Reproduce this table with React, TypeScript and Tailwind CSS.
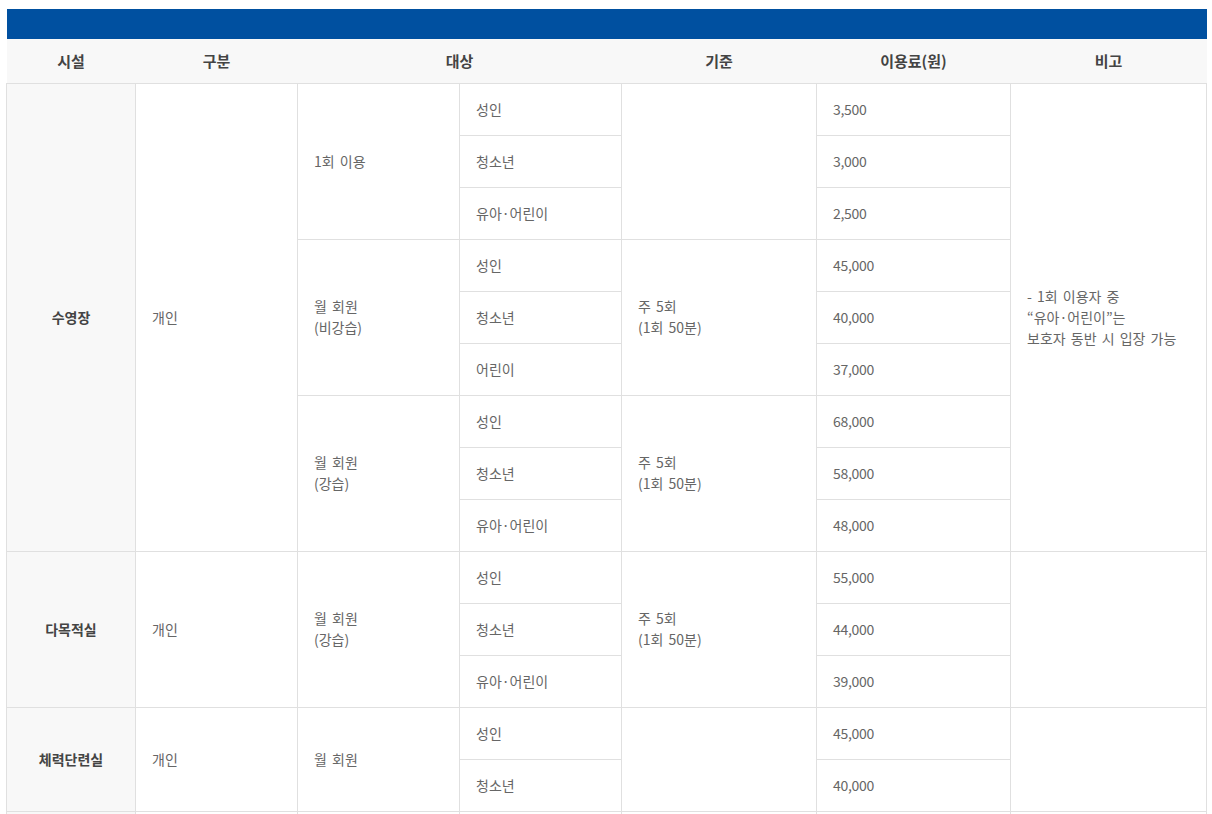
const font = { fontFamily: '"Noto Sans CJK KR", "Noto Sans", sans-serif' };

type Row = { target: string; fee: string };

const cell = "border border-[#e0e0e0] pl-4 pr-2 text-left align-middle";

const Section = ({
  facility,
  kind,
  group,
  rows,
  basis,
  note,
  facilityRows,
  first,
}: {
  facility?: string;
  kind?: string;
  group: React.ReactNode;
  rows: Row[];
  basis?: React.ReactNode;
  note?: React.ReactNode;
  facilityRows?: number;
  first?: boolean;
}) => (
  <>
    {rows.map((r, i) => (
      <tr key={r.target + i} className="h-[52px]">
        {i === 0 && first && (
          <>
            <td
              rowSpan={facilityRows}
              className="border border-[#e0e0e0] bg-[#f8f8f8] text-center font-bold text-[#444]"
            >
              {facility}
            </td>
            <td rowSpan={facilityRows} className={cell}>
              {kind}
            </td>
          </>
        )}
        {i === 0 && (
          <td rowSpan={rows.length} className={`${cell} leading-[21px]`}>
            {group}
          </td>
        )}
        <td className={cell}>{r.target}</td>
        {i === 0 && basis !== null && (
          <td rowSpan={rows.length} className={`${cell} leading-[21px]`}>
            {basis}
          </td>
        )}
        <td className={`${cell} tracking-[-0.3px]`}>{r.fee}</td>
        {i === 0 && note !== undefined && (
          <td rowSpan={facilityRows} className={`${cell} leading-[21px]`}>
            {note}
          </td>
        )}
      </tr>
    ))}
  </>
);

const basis5 = (
  <>
    주 5회
    <br />
    (1회 50분)
  </>
);

export default function App() {
  return (
    <div className="bg-white pl-[6px] pr-[6px] pt-[9px]" style={font}>
      <table className="w-[1200px] table-fixed border-collapse text-[14px] text-[#666] [word-spacing:2px]">
        <colgroup>
          <col className="w-[129px]" />
          <col className="w-[162px]" />
          <col className="w-[162px]" />
          <col className="w-[162px]" />
          <col className="w-[195px]" />
          <col className="w-[194px]" />
          <col className="w-[196px]" />
        </colgroup>
        <thead>
          <tr>
            <td colSpan={7} className="h-[30px] bg-[#0050a0] p-0" />
          </tr>
          <tr className="h-[44px] bg-[#f8f8f8] text-[15px] font-bold text-[#444]">
            <th className="border-b border-[#e0e0e0] text-center">시설</th>
            <th className="border-b border-[#e0e0e0] text-center">구분</th>
            <th colSpan={2} className="border-b border-[#e0e0e0] text-center">
              대상
            </th>
            <th className="border-b border-[#e0e0e0] text-center">기준</th>
            <th className="border-b border-[#e0e0e0] text-center">이용료(원)</th>
            <th className="border-b border-[#e0e0e0] text-center">비고</th>
          </tr>
        </thead>
        <tbody>
          <Section
            first
            facility="수영장"
            kind="개인"
            facilityRows={9}
            group="1회 이용"
            basis=""
            note={
              <>
                - 1회 이용자 중
                <br />
                “유아·어린이”는
                <br />
                보호자 동반 시 입장 가능
              </>
            }
            rows={[
              { target: "성인", fee: "3,500" },
              { target: "청소년", fee: "3,000" },
              { target: "유아·어린이", fee: "2,500" },
            ]}
          />
          <Section
            group={
              <>
                월 회원
                <br />
                (비강습)
              </>
            }
            basis={basis5}
            rows={[
              { target: "성인", fee: "45,000" },
              { target: "청소년", fee: "40,000" },
              { target: "어린이", fee: "37,000" },
            ]}
          />
          <Section
            group={
              <>
                월 회원
                <br />
                (강습)
              </>
            }
            basis={basis5}
            rows={[
              { target: "성인", fee: "68,000" },
              { target: "청소년", fee: "58,000" },
              { target: "유아·어린이", fee: "48,000" },
            ]}
          />
          <Section
            first
            facility="다목적실"
            kind="개인"
            facilityRows={3}
            group={
              <>
                월 회원
                <br />
                (강습)
              </>
            }
            basis={basis5}
            note=""
            rows={[
              { target: "성인", fee: "55,000" },
              { target: "청소년", fee: "44,000" },
              { target: "유아·어린이", fee: "39,000" },
            ]}
          />
          <Section
            first
            facility="체력단련실"
            kind="개인"
            facilityRows={2}
            group="월 회원"
            basis=""
            note=""
            rows={[
              { target: "성인", fee: "45,000" },
              { target: "청소년", fee: "40,000" },
            ]}
          />
          <tr className="h-[52px]">
            <td className="border border-[#e0e0e0] bg-[#f8f8f8]" />
            <td className={cell} />
            <td className={cell} />
            <td className={cell} />
            <td className={cell} />
            <td className={cell} />
            <td className={cell} />
          </tr>
        </tbody>
      </table>
    </div>
  );
}
